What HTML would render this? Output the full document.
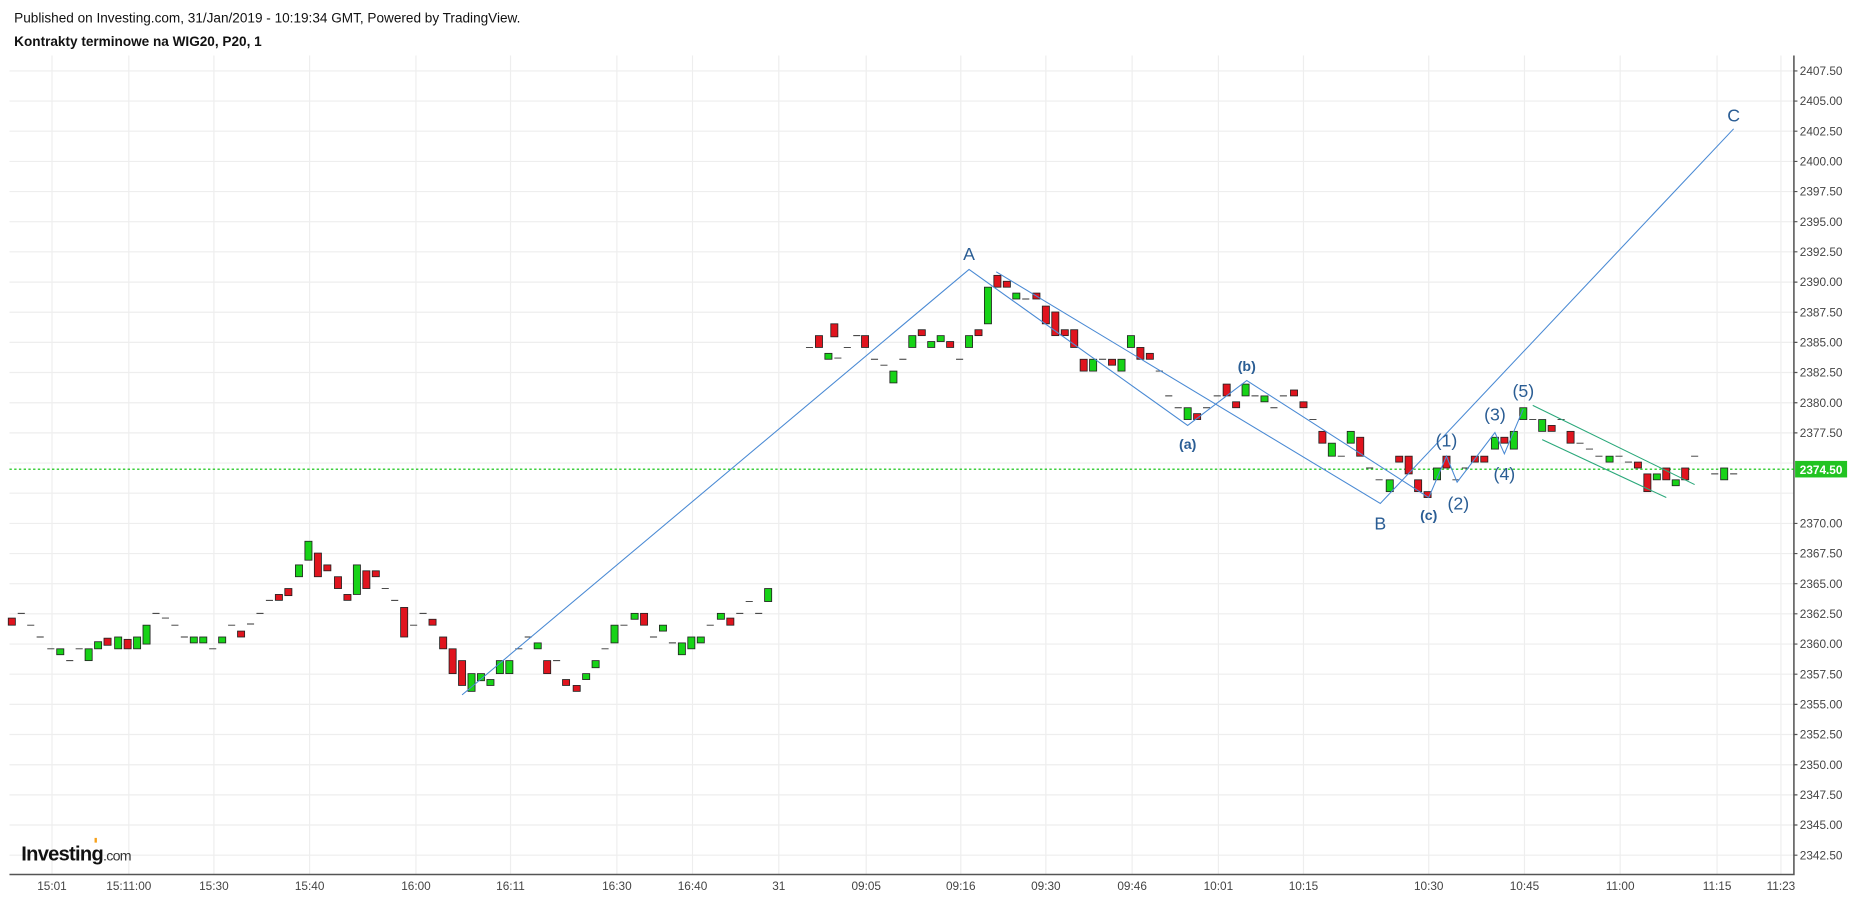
<!DOCTYPE html>
<html><head><meta charset="utf-8"><style>
html,body{margin:0;padding:0;background:#fff;width:1853px;height:899px;overflow:hidden}
svg{display:block}
text{font-family:"Liberation Sans",Arial,sans-serif}
</style></head><body>
<svg width="1853" height="899" viewBox="0 0 1568 760.7" preserveAspectRatio="none" xmlns="http://www.w3.org/2000/svg">
<text x="12" y="19" font-size="11.5" fill="#111">Published on Investing.com, 31/Jan/2019 - 10:19:34 GMT, Powered by TradingView.</text>
<text x="12" y="39" font-size="11.5" font-weight="bold" fill="#111">Kontrakty terminowe na WIG20, P20, 1</text>
<g stroke="#eeeeee" stroke-width="1">
<path d="M8 60H1518M8 85.5H1518M8 111H1518M8 136.6H1518M8 162.1H1518M8 187.6H1518M8 213.1H1518M8 238.7H1518M8 264.2H1518M8 289.7H1518M8 315.2H1518M8 340.8H1518M8 366.3H1518M8 391.8H1518M8 417.3H1518M8 442.9H1518M8 468.4H1518M8 493.9H1518M8 519.4H1518M8 545H1518M8 570.5H1518M8 596H1518M8 621.5H1518M8 647.1H1518M8 672.6H1518M8 698.1H1518M8 723.6H1518"/>
<path d="M44 47V740M109 47V740M181 47V740M262 47V740M352 47V740M432 47V740M522 47V740M586 47V740M659 47V740M733 47V740M813 47V740M885 47V740M958 47V740M1031 47V740M1103 47V740M1209 47V740M1290 47V740M1371 47V740M1453 47V740M1507 47V740"/>
</g>
<path d="M8 740H1518V47" stroke="#555" stroke-width="1.3" fill="none"/>
<g font-size="10" fill="#444">
<text x="1523" y="63.5">2407.50</text><text x="1523" y="89">2405.00</text><text x="1523" y="114.5">2402.50</text><text x="1523" y="140">2400.00</text><text x="1523" y="165.6">2397.50</text><text x="1523" y="191.1">2395.00</text><text x="1523" y="216.6">2392.50</text><text x="1523" y="242.2">2390.00</text><text x="1523" y="267.7">2387.50</text><text x="1523" y="293.2">2385.00</text><text x="1523" y="318.7">2382.50</text><text x="1523" y="344.3">2380.00</text><text x="1523" y="369.8">2377.50</text><text x="1523" y="446.4">2370.00</text><text x="1523" y="471.9">2367.50</text><text x="1523" y="497.4">2365.00</text><text x="1523" y="522.9">2362.50</text><text x="1523" y="548.5">2360.00</text><text x="1523" y="574">2357.50</text><text x="1523" y="599.5">2355.00</text><text x="1523" y="625">2352.50</text><text x="1523" y="650.6">2350.00</text><text x="1523" y="676.1">2347.50</text><text x="1523" y="701.6">2345.00</text><text x="1523" y="727.1">2342.50</text>
</g>
<g stroke="#555"><path d="M1518 60h3M1518 85.5h3M1518 111h3M1518 136.6h3M1518 162.1h3M1518 187.6h3M1518 213.1h3M1518 238.7h3M1518 264.2h3M1518 289.7h3M1518 315.2h3M1518 340.8h3M1518 366.3h3M1518 442.9h3M1518 468.4h3M1518 493.9h3M1518 519.4h3M1518 545h3M1518 570.5h3M1518 596h3M1518 621.5h3M1518 647.1h3M1518 672.6h3M1518 698.1h3M1518 723.6h3"/></g>
<g font-size="10" fill="#444" text-anchor="middle">
<text x="44" y="753">15:01</text><text x="109" y="753">15:11:00</text><text x="181" y="753">15:30</text><text x="262" y="753">15:40</text><text x="352" y="753">16:00</text><text x="432" y="753">16:11</text><text x="522" y="753">16:30</text><text x="586" y="753">16:40</text><text x="659" y="753">31</text><text x="733" y="753">09:05</text><text x="813" y="753">09:16</text><text x="885" y="753">09:30</text><text x="958" y="753">09:46</text><text x="1031" y="753">10:01</text><text x="1103" y="753">10:15</text><text x="1209" y="753">10:30</text><text x="1290" y="753">10:45</text><text x="1371" y="753">11:00</text><text x="1453" y="753">11:15</text><text x="1507" y="753">11:23</text>
</g>
<path d="M8 397H1518" stroke="#00c000" stroke-width="1" stroke-dasharray="2,2"/>
<rect x="1519" y="390" width="44" height="14" fill="#22c322"/>
<text x="1541" y="401" font-size="10" fill="#fff" text-anchor="middle" font-weight="bold">2374.50</text>
<g stroke="#333" stroke-width="0.8">
<path d="M15 519h6M23 529h6M31 539h6M40 549h6M56 559h6M64 549h6M129 519h6M137 523h6M145 529h6M153 539h6M177 549h6M193 529h6M209 528h6M217 519h6M225 508h6M323 498h6M331 508h6M347 529h6M355 519h6M436 549h6M444 539h6M468 559h6M509 549h6M525 529h6M550 539h6M566 544h6M598 529h6M623 519h6M631 509h6M639 519h6M682 294h6M706 303h6M714 294h6M722 284h6M737 304h6M745 309h6M761 304h6M809 304h6M865 253h6M930 304h6M978 314h6M986 335h6M994 345h6M1018 345h6M1027 335h6M1059 335h6M1075 345h6M1083 335h6M1108 355h6M1132 386h6M1156 396h6M1164 406h6M1229 406h6M1237 396h6M1294 355h6M1318 355h6M1334 375h6M1342 380h6M1350 386h6M1367 386h6M1375 391h6M1431 386h6M1448 401h6M1464 401h6"/>
</g>
<g stroke="#222" stroke-width="0.7">
<g fill="#e0141e">
<rect x="7" y="523" width="6" height="6"/><rect x="88" y="540" width="6" height="6"/><rect x="105" y="541" width="6" height="8"/><rect x="201" y="534" width="6" height="5"/><rect x="233" y="503" width="6" height="5"/><rect x="241" y="498" width="6" height="6"/><rect x="266" y="468" width="6" height="20"/><rect x="274" y="478" width="6" height="5"/><rect x="283" y="488" width="6" height="10"/><rect x="291" y="503" width="6" height="5"/><rect x="307" y="483" width="6" height="15"/><rect x="315" y="483" width="6" height="5"/><rect x="339" y="514" width="6" height="25"/><rect x="363" y="524" width="6" height="5"/><rect x="372" y="539" width="6" height="10"/><rect x="380" y="549" width="6" height="21"/><rect x="388" y="559" width="6" height="21"/><rect x="460" y="559" width="6" height="11"/><rect x="476" y="575" width="6" height="5"/><rect x="485" y="580" width="6" height="5"/><rect x="542" y="519" width="6" height="10"/><rect x="615" y="523" width="6" height="6"/>
<rect x="690" y="284" width="6" height="10"/><rect x="703" y="274" width="6" height="11"/><rect x="729" y="284" width="6" height="10"/><rect x="777" y="279" width="6" height="5"/><rect x="801" y="289" width="6" height="5"/><rect x="825" y="279" width="6" height="5"/><rect x="841" y="233" width="6" height="10"/><rect x="849" y="238" width="6" height="5"/><rect x="874" y="248" width="6" height="5"/><rect x="882" y="259" width="6" height="15"/><rect x="890" y="264" width="6" height="20"/><rect x="898" y="279" width="6" height="5"/><rect x="906" y="279" width="6" height="15"/><rect x="914" y="304" width="6" height="10"/><rect x="938" y="304" width="6" height="5"/><rect x="962" y="294" width="6" height="10"/><rect x="970" y="299" width="6" height="5"/><rect x="1010" y="350" width="6" height="5"/><rect x="1035" y="325" width="6" height="10"/><rect x="1043" y="340" width="6" height="5"/><rect x="1092" y="330" width="6" height="5"/><rect x="1100" y="340" width="6" height="5"/><rect x="1116" y="365" width="6" height="10"/><rect x="1148" y="370" width="6" height="16"/><rect x="1181" y="386" width="6" height="5"/><rect x="1189" y="386" width="6" height="15"/><rect x="1197" y="406" width="6" height="10"/><rect x="1205" y="416" width="6" height="5"/><rect x="1221" y="386" width="6" height="10"/><rect x="1245" y="386" width="6" height="5"/><rect x="1253" y="386" width="6" height="5"/><rect x="1270" y="370" width="6" height="5"/><rect x="1310" y="360" width="6" height="5"/><rect x="1326" y="365" width="6" height="10"/><rect x="1383" y="391" width="6" height="5"/><rect x="1391" y="401" width="6" height="15"/><rect x="1407" y="396" width="6" height="10"/><rect x="1423" y="396" width="6" height="10"/>
</g>
<g fill="#17d317">
<rect x="48" y="549" width="6" height="5"/><rect x="72" y="549" width="6" height="10"/><rect x="80" y="543" width="6" height="6"/><rect x="97" y="539" width="6" height="10"/><rect x="113" y="539" width="6" height="10"/><rect x="121" y="529" width="6" height="16"/><rect x="161" y="539" width="6" height="5"/><rect x="169" y="539" width="6" height="5"/><rect x="185" y="539" width="6" height="5"/><rect x="250" y="478" width="6" height="10"/><rect x="258" y="458" width="6" height="16"/><rect x="299" y="478" width="6" height="25"/><rect x="396" y="570" width="6" height="15"/><rect x="404" y="570" width="6" height="6"/><rect x="412" y="575" width="6" height="5"/><rect x="420" y="559" width="6" height="11"/><rect x="428" y="559" width="6" height="11"/><rect x="452" y="544" width="6" height="5"/><rect x="493" y="570" width="6" height="5"/><rect x="501" y="559" width="6" height="6"/><rect x="517" y="529" width="6" height="15"/><rect x="534" y="519" width="6" height="5"/><rect x="558" y="529" width="6" height="5"/><rect x="574" y="544" width="6" height="10"/><rect x="582" y="539" width="6" height="10"/><rect x="590" y="539" width="6" height="5"/><rect x="607" y="519" width="6" height="5"/><rect x="647" y="498" width="6" height="11"/>
<rect x="698" y="299" width="6" height="5"/><rect x="753" y="314" width="6" height="10"/><rect x="769" y="284" width="6" height="10"/><rect x="785" y="289" width="6" height="5"/><rect x="793" y="284" width="6" height="5"/><rect x="817" y="284" width="6" height="10"/><rect x="833" y="243" width="6" height="31"/><rect x="857" y="248" width="6" height="5"/><rect x="922" y="304" width="6" height="10"/><rect x="946" y="304" width="6" height="10"/><rect x="954" y="284" width="6" height="10"/><rect x="1002" y="345" width="6" height="10"/><rect x="1051" y="325" width="6" height="10"/><rect x="1067" y="335" width="6" height="5"/><rect x="1124" y="375" width="6" height="11"/><rect x="1140" y="365" width="6" height="10"/><rect x="1173" y="406" width="6" height="10"/><rect x="1213" y="396" width="6" height="10"/><rect x="1262" y="370" width="6" height="10"/><rect x="1278" y="365" width="6" height="15"/><rect x="1286" y="345" width="6" height="10"/><rect x="1302" y="355" width="6" height="10"/><rect x="1359" y="386" width="6" height="5"/><rect x="1399" y="401" width="6" height="5"/><rect x="1415" y="406" width="6" height="5"/><rect x="1456" y="396" width="6" height="10"/>
</g>
</g>
<g stroke="#4a8ad4" stroke-width="0.9" fill="none">
<polyline points="391,588 820,228 1005,360 1055,322 1209,421"/>
<polyline points="843,230 1168,426 1467,109"/>
<polyline points="1209,421 1224,386 1233,408 1265,366 1273,384 1289,346"/>
</g>
<g stroke="#2aa87a" stroke-width="0.9"><path d="M1297 343L1434 410M1305 372L1410 421"/></g>
<g fill="#2a5d94" font-size="15" text-anchor="middle">
<text x="820" y="220">A</text><text x="1168" y="448">B</text><text x="1467" y="103">C</text>
<text x="1224" y="378">(1)</text><text x="1234" y="431">(2)</text><text x="1265" y="356">(3)</text><text x="1273" y="406">(4)</text><text x="1289" y="336">(5)</text>
</g>
<g fill="#2a5d94" font-size="12" font-weight="bold" text-anchor="middle">
<text x="1005" y="380">(a)</text><text x="1055" y="314">(b)</text><text x="1209" y="440">(c)</text>
</g>
<text x="18" y="728" font-size="17" font-weight="bold" fill="#111" letter-spacing="-0.6">Investing<tspan font-size="12" font-weight="normal" fill="#333">.com</tspan></text>
<rect x="80" y="709" width="2" height="4" fill="#f7a21b"/>
</svg>
</body></html>
